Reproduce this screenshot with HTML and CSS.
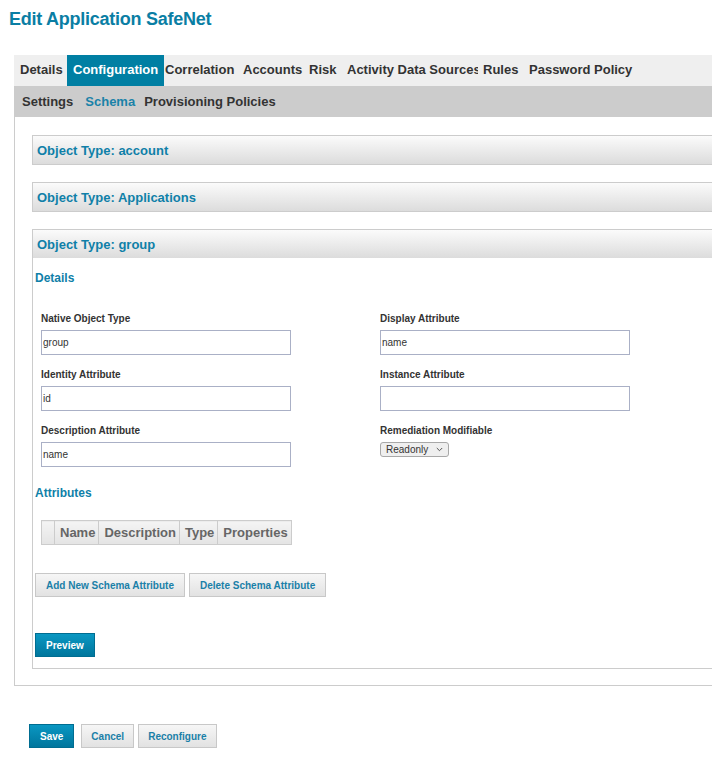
FILE: index.html
```html
<!DOCTYPE html>
<html>
<head>
<meta charset="utf-8">
<title>Edit Application SafeNet</title>
<link rel="stylesheet" href="styles.css">
</head>
<body>
<h1 class="title">Edit Application SafeNet</h1>
<div class="app">
  <div class="tabbar">
    <span class="tab w-details">Details</span>
    <span class="tab active w-config">Configuration</span>
    <span class="tab w-corr">Correlation</span>
    <span class="tab w-acc">Accounts</span>
    <span class="tab w-risk">Risk</span>
    <span class="tab w-act">Activity Data Sources</span>
    <span class="tab w-rules">Rules</span>
    <span class="tab w-pw">Password Policy</span>
  </div>
  <div class="subbar">
    <span class="sub s-settings">Settings</span>
    <span class="sub sub-active s-schema">Schema</span>
    <span class="sub">Provisioning Policies</span>
  </div>
  <div class="content">
    <div class="panel">
      <div class="panel-head">Object Type: account</div>
    </div>
    <div class="panel">
      <div class="panel-head">Object Type: Applications</div>
    </div>
    <div class="panel open">
      <div class="panel-head nobottom">Object Type: group</div>
      <div class="panel-body">
        <h3 class="section">Details</h3>
        <div class="fields">
          <div class="field">
            <label class="lbl">Native Object Type</label>
            <input class="txt" type="text" value="group">
          </div>
          <div class="field">
            <label class="lbl">Display Attribute</label>
            <input class="txt" type="text" value="name">
          </div>
          <div class="field">
            <label class="lbl">Identity Attribute</label>
            <input class="txt" type="text" value="id">
          </div>
          <div class="field">
            <label class="lbl">Instance Attribute</label>
            <input class="txt" type="text" value="">
          </div>
          <div class="field">
            <label class="lbl">Description Attribute</label>
            <input class="txt" type="text" value="name">
          </div>
          <div class="field">
            <label class="lbl">Remediation Modifiable</label>
            <span class="fakeselect">Readonly<svg class="chev" width="7" height="5" viewBox="0 0 7 5"><path d="M0.8 1 L3.5 3.7 L6.2 1" fill="none" stroke="#555" stroke-width="1"/></svg></span>
          </div>
        </div>
        <h3 class="section attr-head">Attributes</h3>
        <table class="attrs">
          <thead>
            <tr>
              <th class="c-check"></th>
              <th>Name</th>
              <th>Description</th>
              <th>Type</th>
              <th>Properties</th>
            </tr>
          </thead>
        </table>
        <div class="btnrow">
          <button class="btn">Add New Schema Attribute</button>
          <button class="btn">Delete Schema Attribute</button>
        </div>
        <div class="preview-row">
          <button class="btn primary">Preview</button>
        </div>
      </div>
    </div>
  </div>
</div>
<div class="footer">
  <button class="btn primary save">Save</button>
  <button class="btn">Cancel</button>
  <button class="btn">Reconfigure</button>
</div>
</body>
</html>
```
FILE: styles.css
```css
html, body {
  overflow: hidden;
}
body {
  margin: 0;
  background: #ffffff;
  font-family: "Liberation Sans", Arial, sans-serif;
  color: #333333;
}
.title {
  margin: 0;
  padding: 9px 0 0 9px;
  font-size: 18px;
  line-height: 21px;
  font-weight: bold;
  letter-spacing: -0.25px;
  color: #0a7ea4;
}
.app {
  margin: 25px 0 0 14px;
  width: 760px;
}
.tabbar {
  display: flex;
  height: 31px;
  background: #efefef;
}
.tab {
  box-sizing: border-box;
  padding-left: 6px;
  font-size: 13px;
  font-weight: bold;
  line-height: 30px;
  white-space: nowrap;
  overflow: hidden;
  color: #333333;
  flex: none;
}
.tab.active {
  background: #007fa3;
  color: #ffffff;
}
.w-details { width: 53px; }
.w-config { width: 97px; }
.w-corr { width: 73px; padding-left: 1px; }
.w-acc { width: 66px; }
.w-risk { width: 38px; }
.w-act { width: 137px; }
.w-rules { width: 45px; padding-left: 5px; }
.w-pw { width: 140px; }
.subbar {
  display: flex;
  height: 31px;
  background: #cccccc;
  padding-left: 8px;
}
.sub {
  font-size: 13px;
  font-weight: bold;
  line-height: 31px;
  color: #333333;
  white-space: nowrap;
}
.s-settings { margin-right: 12px; }
.s-schema { margin-right: 9px; }
.sub-active { color: #1a82a8; }
.content {
  border-left: 1px solid #cccccc;
  border-bottom: 1px solid #cccccc;
  padding: 18px 0 16px 17px;
}
.panel {
  border-left: 1px solid #cccccc;
  margin-bottom: 17px;
}
.panel.open {
  margin-bottom: 0;
  border-bottom: 1px solid #cccccc;
}
.panel-head {
  height: 28px;
  line-height: 30px;
  border-top: 1px solid #cccccc;
  border-bottom: 1px solid #cccccc;
  background: linear-gradient(#fbfbfb, #dcdcdc);
  padding-left: 4px;
  font-size: 13px;
  font-weight: bold;
  color: #0f80a8;
  overflow: hidden;
}
.panel-head.nobottom {
  border-bottom: none;
}
.panel-body {
  padding: 13px 0 11px 0;
}
.section {
  margin: 0;
  padding-left: 2px;
  font-size: 12px;
  line-height: 14px;
  font-weight: bold;
  color: #0f80a8;
}
.fields {
  display: grid;
  grid-template-columns: 339px 260px;
  row-gap: 14px;
  margin-top: 28px;
  padding-left: 8px;
}
.field {
  display: flex;
  flex-direction: column;
  align-items: flex-start;
}
.lbl {
  font-size: 10px;
  line-height: 11px;
  font-weight: bold;
  color: #333333;
  margin-bottom: 6px;
}
.txt {
  box-sizing: border-box;
  width: 250px;
  height: 25px;
  margin: 0;
  border: 1px solid #aab0c6;
  padding: 0 1px;
  font-family: "Liberation Sans", Arial, sans-serif;
  font-size: 10px;
  color: #333333;
  background: #ffffff;
  outline: none;
}
.fakeselect {
  box-sizing: border-box;
  display: inline-flex;
  align-items: center;
  justify-content: space-between;
  width: 69px;
  height: 15px;
  padding: 0 5px 0 5px;
  border: 1px solid #a8a8a8;
  border-radius: 3px;
  background: #efefef;
  font-size: 10px;
  color: #333333;
}
.chev {
  display: block;
}
.attr-head {
  margin-top: 19px;
}
.attrs {
  border-collapse: collapse;
  margin: 20px 0 0 8px;
}
.attrs th {
  height: 23px;
  padding: 0 3px 0 5px;
  border: 1px solid #cccccc;
  background: linear-gradient(#f4f4f4, #e4e4e4);
  font-size: 13px;
  line-height: 23px;
  font-weight: bold;
  color: #666666;
  text-align: left;
  white-space: nowrap;
}
.attrs th.c-check {
  width: 12px;
  padding: 0;
}
.btnrow {
  display: flex;
  gap: 4px;
  margin-top: 28px;
  padding-left: 2px;
}
.preview-row {
  display: flex;
  margin-top: 36px;
  padding-left: 2px;
}
.btn {
  box-sizing: border-box;
  height: 24px;
  margin: 0;
  padding: 2px 10px 0 10px;
  border: 1px solid #c8c8c8;
  background: linear-gradient(#f6f6f6, #e2e2e2);
  font-family: "Liberation Sans", Arial, sans-serif;
  font-size: 10px;
  font-weight: bold;
  line-height: 20px;
  color: #1a80a8;
  cursor: pointer;
}
.btn.primary {
  border-color: #006d91;
  background: linear-gradient(#0a97c2, #00769d);
  color: #ffffff;
}
.footer {
  display: flex;
  gap: 4px;
  margin: 38px 0 0 29px;
}
.footer .btn {
  padding-left: 9px;
  padding-right: 9px;
}
.footer .save {
  margin-right: 3px;
  padding-left: 10px;
  padding-right: 10px;
}
```
